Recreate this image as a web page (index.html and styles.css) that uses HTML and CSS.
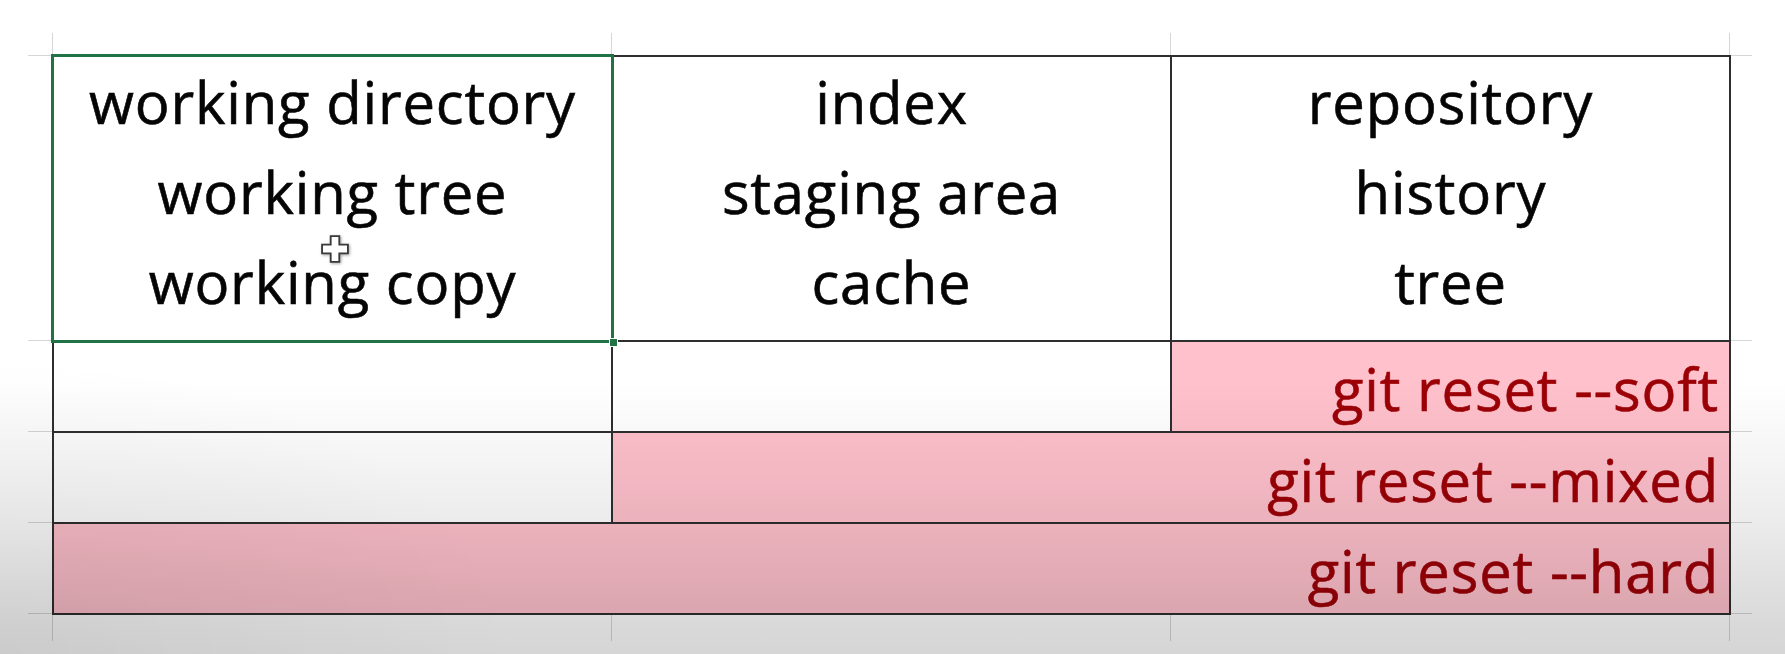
FILE: index.html
```html
<!DOCTYPE html>
<html lang="en">
<head>
<meta charset="utf-8">
<title>git reset</title>
<link rel="stylesheet" href="styles.css">
</head>
<body>
<div class="sheet">
  <div class="grid">
    <div class="cell head"><span>working directory</span><span>working tree</span><span>working copy</span></div>
    <div class="cell head"><span>index</span><span>staging area</span><span>cache</span></div>
    <div class="cell head"><span>repository</span><span>history</span><span>tree</span></div>
    <div class="cell"></div>
    <div class="cell"></div>
    <div class="cell reset">git reset --soft</div>
    <div class="cell"></div>
    <div class="cell reset span2">git reset --mixed</div>
    <div class="cell reset span3">git reset --hard</div>
    <div class="selection"><i class="handle"></i></div>
    <svg class="cursor" viewBox="0 0 26 26" width="32" height="32">
      <path d="M9.5 2.5h7v7h7v7h-7v7h-7v-7h-7v-7h7z" fill="#ffffff" stroke="#3a3a3a" stroke-width="1.5" stroke-linejoin="miter"/>
    </svg>
  </div>
</div>
</body>
</html>
```
FILE: styles.css
```css
html, body {
  margin: 0;
  padding: 0;
}
body {
  background: #ffffff;
  width: 1785px;
  height: 654px;
  overflow: hidden;
  font-family: "Open Sans", "Lato", sans-serif;
  position: relative;
}
body::after {
  content: "";
  position: fixed;
  inset: 0;
  pointer-events: none;
  mix-blend-mode: multiply;
  background:
    radial-gradient(ellipse 520px 300px at 0 100%, rgba(0,0,0,0.05), rgba(0,0,0,0)),
    linear-gradient(to bottom, #ffffff 0, #ffffff 380px, #f6f6f6 450px, #ececec 520px, #e0e0e0 585px, #d9d9d9 625px, #d6d6d6 654px);
}
.sheet {
  margin: 33px 0 0 28px;
  width: 1724px;
  height: 608px;
  box-sizing: border-box;
  padding: 22px 0 0 24px;
  background-color: #ffffff;
  background-image:
    linear-gradient(#d6d6d6, #d6d6d6),
    linear-gradient(#d6d6d6, #d6d6d6),
    linear-gradient(#d6d6d6, #d6d6d6),
    linear-gradient(#d6d6d6, #d6d6d6),
    linear-gradient(#d6d6d6, #d6d6d6),
    linear-gradient(#d6d6d6, #d6d6d6),
    linear-gradient(#d6d6d6, #d6d6d6),
    linear-gradient(#d6d6d6, #d6d6d6),
    linear-gradient(#d6d6d6, #d6d6d6);
  background-repeat: no-repeat;
  background-size:
    1px 100%, 1px 100%, 1px 100%, 1px 100%,
    100% 1px, 100% 1px, 100% 1px, 100% 1px, 100% 1px;
  background-position:
    24px 0, 583px 0, 1142px 0, 1701px 0,
    0 22px, 0 307px, 0 398px, 0 489px, 0 580px;
}
.grid {
  position: relative;
  display: grid;
  grid-template-columns: repeat(3, 559px);
  grid-template-rows: 285px 91px 91px 91px;
  width: max-content;
  border-top: 2px solid #2e2e2e;
  border-left: 2px solid #2e2e2e;
}
.cell {
  box-sizing: border-box;
  border-right: 2px solid #2e2e2e;
  border-bottom: 2px solid #2e2e2e;
  background: #ffffff;
  font-size: 58px;
  font-weight: 500;
  letter-spacing: 0.8px;
  -webkit-text-stroke: 0.6px currentColor;
  color: #050505;
}
.head {
  display: flex;
  flex-direction: column;
  align-items: center;
  justify-content: flex-start;
  line-height: 90px;
  padding-top: 0;
}
.reset {
  display: flex;
  align-items: flex-end;
  justify-content: flex-end;
  line-height: 1.2;
  padding: 0 10px 7px 0;
  background: #ffc1cc;
  color: #9c0006;
}
.span2 {
  grid-column: span 2;
}
.span3 {
  grid-column: span 3;
}
.selection {
  position: absolute;
  left: -3px;
  top: -3px;
  width: 563px;
  height: 289px;
  box-sizing: border-box;
  border: 3px solid #217346;
  pointer-events: none;
}
.handle {
  position: absolute;
  right: -6px;
  bottom: -6px;
  width: 7px;
  height: 7px;
  background: #217346;
  outline: 1px solid #ffffff;
}
.cursor {
  position: absolute;
  left: 265px;
  top: 176px;
  filter: drop-shadow(1px 1px 1.5px rgba(0,0,0,0.35));
}
```
